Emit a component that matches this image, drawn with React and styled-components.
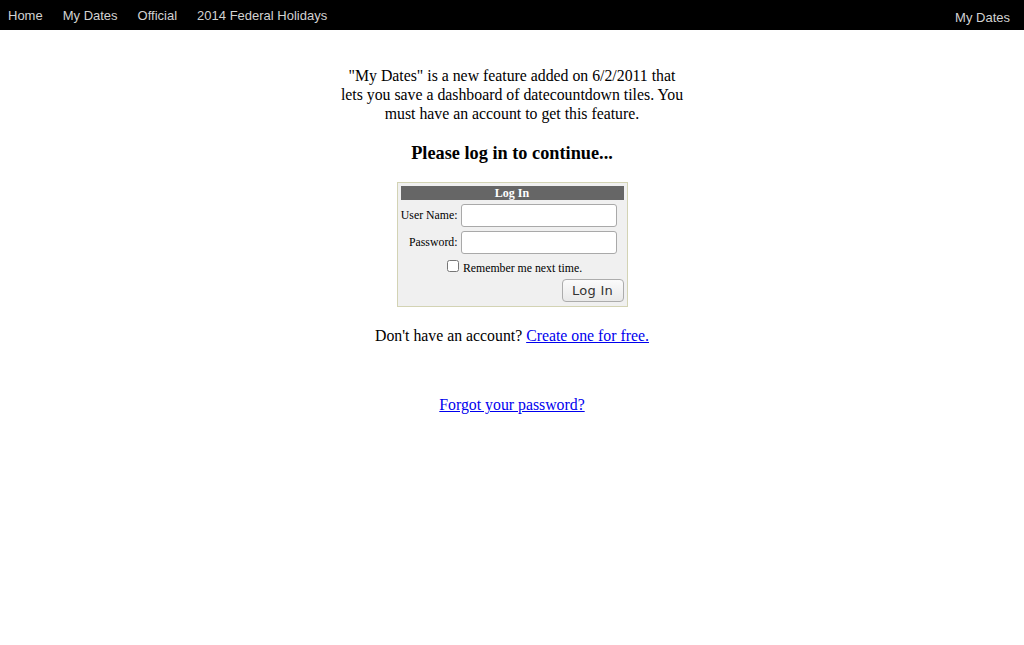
import React from 'react';
import styled, { createGlobalStyle } from 'styled-components';

const GlobalStyle = createGlobalStyle`
  html, body {
    margin: 0;
    padding: 0;
    background: #fff;
    font-family: "Liberation Serif", "Times New Roman", serif;
    color: #000;
  }
`;

const TopBar = styled.nav`
  display: flex;
  align-items: flex-start;
  justify-content: space-between;
  height: 30px;
  background-color: #000;
  font-family: "Liberation Sans", Arial, sans-serif;
  font-size: 13px;
`;

const NavList = styled.div`
  display: flex;
  gap: 20px;
  padding: 8px 0 0 8px;
`;

const NavLink = styled.a`
  color: #d2d2d2;
  text-decoration: none;
  line-height: 15px;
  cursor: pointer;
`;

const RightLink = styled(NavLink)`
  padding: 10px 14px 0 0;
`;

const Content = styled.main`
  width: 350px;
  margin: 0 auto;
  padding-top: 36px;
  text-align: center;
`;

const Intro = styled.p`
  font-size: 15.8px;
  line-height: 19px;
  margin: 0;
`;

const Heading = styled.h3`
  font-size: 18.3px;
  font-weight: bold;
  line-height: 22px;
  margin: 19px 0 18px;
`;

const LoginBox = styled.form`
  width: 223px;
  margin: 0 auto;
  padding: 3px 3px 4px;
  border: 1px solid #d3d3b4;
  background: #f0f0f0;
  font-size: 12px;
  text-align: left;
`;

const TitleBar = styled.div`
  background: #666;
  color: #fff;
  font-weight: bold;
  text-align: center;
  height: 14px;
  line-height: 14px;
`;

const FieldGrid = styled.div`
  display: grid;
  grid-template-columns: 57px 156px;
  column-gap: 3px;
  row-gap: 4px;
  align-items: center;
  margin-top: 4px;
`;

const Label = styled.label`
  text-align: right;
  white-space: nowrap;
  font-size: 11.8px;
`;

const TextInput = styled.input`
  box-sizing: border-box;
  width: 156px;
  height: 23px;
  border: 1px solid #a9a9a9;
  border-radius: 3px;
  background: #fff;
  padding: 2px 4px;
  font-size: 13px;
`;

const RememberRow = styled.div`
  display: flex;
  justify-content: center;
  align-items: center;
  gap: 4px;
  margin-top: 6px;
  margin-left: 5px;
  height: 16px;
  font-size: 11.8px;
`;

const CheckBox = styled.input`
  margin: 0;
  width: 12px;
  height: 12px;
  position: relative;
  top: -2px;
`;

const ButtonRow = styled.div`
  display: flex;
  justify-content: flex-end;
  margin-top: 3px;
`;

const SubmitButton = styled.button`
  width: 62px;
  height: 23px;
  border: 1px solid #acacac;
  border-radius: 4px;
  background: linear-gradient(#fbfbfb, #e9e9e9);
  font-family: "DejaVu Sans", sans-serif;
  font-size: 13px;
  letter-spacing: 0.3px;
  color: #333;
  padding: 0;
`;

const SignupLine = styled.p`
  font-size: 15.8px;
  line-height: 19px;
  margin: 19px 0 0;
`;

const ForgotLine = styled.p`
  font-size: 15.8px;
  line-height: 19px;
  margin: 50px 0 0;
`;

const TextLink = styled.a`
  color: #0000ee;
  text-decoration: underline;
  cursor: pointer;
`;

const App = () => {
  return (
    <>
      <GlobalStyle />
      <TopBar>
        <NavList>
          <NavLink>Home</NavLink>
          <NavLink>My Dates</NavLink>
          <NavLink>Official</NavLink>
          <NavLink>2014 Federal Holidays</NavLink>
        </NavList>
        <RightLink>My Dates</RightLink>
      </TopBar>

      <Content>
        <Intro>
          "My Dates" is a new feature added on 6/2/2011 that lets you save a
          dashboard of datecountdown tiles. You must have an account to get
          this feature.
        </Intro>

        <Heading>Please log in to continue...</Heading>

        <LoginBox onSubmit={(e) => e.preventDefault()}>
          <TitleBar>Log In</TitleBar>
          <FieldGrid>
            <Label htmlFor="user">User Name:</Label>
            <TextInput id="user" type="text" />
            <Label htmlFor="pass">Password:</Label>
            <TextInput id="pass" type="password" />
          </FieldGrid>
          <RememberRow>
            <CheckBox type="checkbox" id="remember" />
            <label htmlFor="remember">Remember me next time.</label>
          </RememberRow>
          <ButtonRow>
            <SubmitButton type="submit">Log In</SubmitButton>
          </ButtonRow>
        </LoginBox>

        <SignupLine>
          Don't have an account? <TextLink>Create one for free.</TextLink>
        </SignupLine>

        <ForgotLine>
          <TextLink>Forgot your password?</TextLink>
        </ForgotLine>
      </Content>
    </>
  );
};

export default App;
